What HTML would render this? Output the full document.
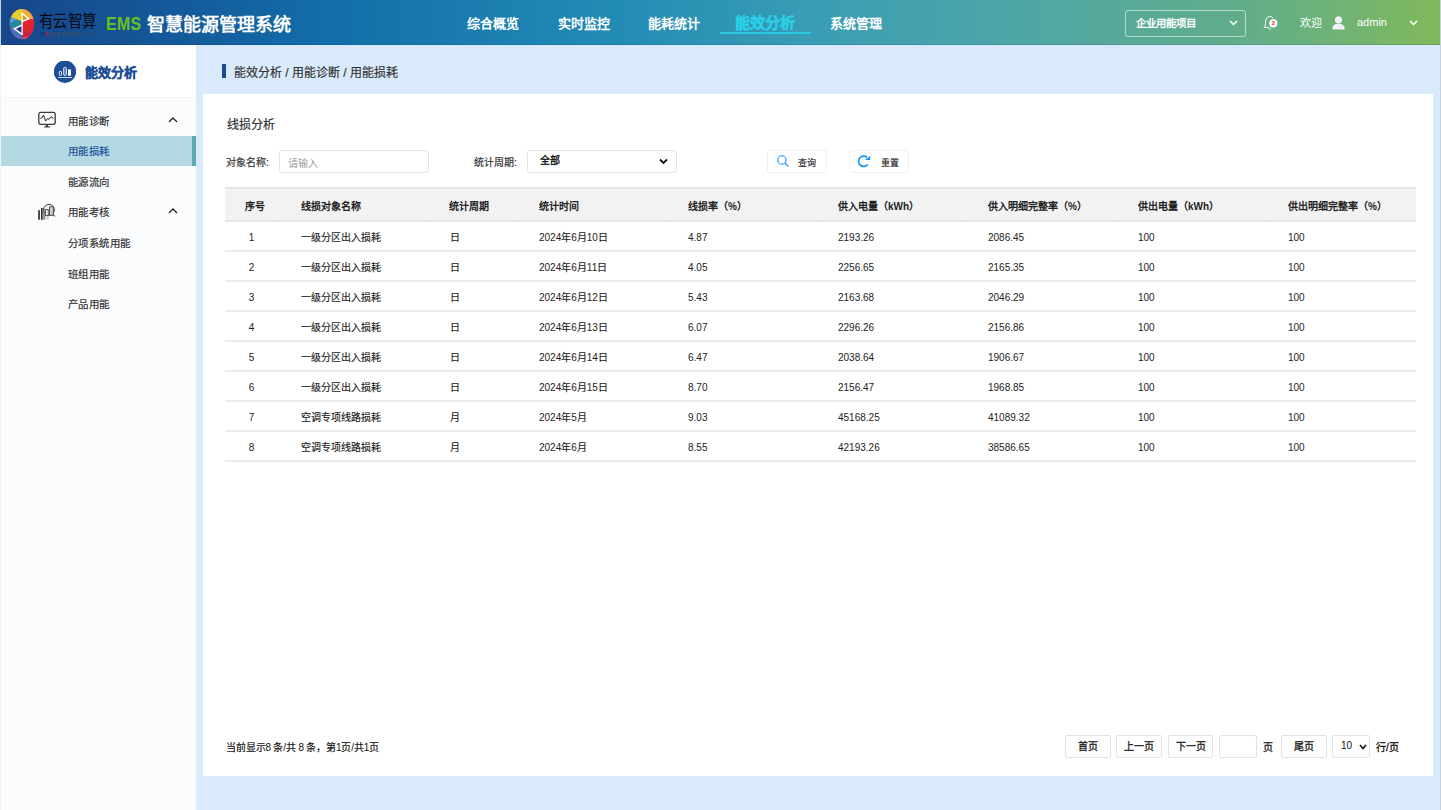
<!DOCTYPE html>
<html lang="zh-CN"><head><meta charset="utf-8"><title>EMS</title>
<style>
*{margin:0;padding:0;box-sizing:border-box}
html,body{width:1441px;height:810px;overflow:hidden;background:#d9eafd;font-family:"Liberation Sans",sans-serif;color:#333}
.abs{position:absolute;white-space:nowrap}
#hdr{position:absolute;left:0;top:0;width:1441px;height:45px;background:linear-gradient(90deg,#17468a 0px,#14599a 170px,#126da8 320px,#228bb5 610px,#3a9db5 810px,#4da6a7 1010px,#63ae88 1260px,#7fb85e 1430px,#7fb85e 1441px)}
.nav{position:absolute;top:15px;font-size:13px;font-weight:bold;color:#fff;line-height:18px;white-space:nowrap}
.mi{position:absolute;left:68px;font-size:11px;line-height:14px;color:#333;white-space:nowrap;transform:scale(0.95);transform-origin:0 0}
.lbl{position:absolute;font-size:10px;line-height:12px;color:#333;font-weight:500;white-space:nowrap}
.box{position:absolute;border:1px solid #e3e3e3;border-radius:3px;background:#fff}
.th{position:absolute;top:201px;font-size:10px;line-height:12px;font-weight:bold;color:#222;white-space:nowrap}
.td{position:absolute;font-size:10px;line-height:12px;color:#222;white-space:nowrap}
.pb{position:absolute;top:735px;height:23px;border:1px solid #e3e3e3;border-radius:2px;background:#fff}
.md{-webkit-text-stroke:0.2px currentColor}
.bd{-webkit-text-stroke:0.3px currentColor}
.c{-webkit-text-stroke:0.15px currentColor}
.pt{position:absolute;top:741px;font-size:10px;line-height:12px;color:#333;white-space:nowrap}
</style></head><body>
<div id="hdr"></div>
<div class="abs" style="left:0;top:44px;width:1441px;height:1px;background:rgba(0,20,80,0.12)"></div>
<div class="abs" style="left:0;top:0;width:1px;height:45px;background:#c5d3e6"></div>
<svg class="abs" style="left:9px;top:8px" width="27" height="32" viewBox="0 0 27 32">
 <defs><clipPath id="ell"><ellipse cx="12.9" cy="16" rx="12.2" ry="15.1"/></clipPath></defs>
 <g clip-path="url(#ell)">
  <rect x="0" y="0" width="27" height="32" fill="#e03050"/>
  <polygon points="0,0 13,0 13,13.6 0,8.5" fill="#e3cf2e"/>
  <polygon points="0,8.5 8,11.5 0,16" fill="#48a6da"/>
  <polygon points="0,16 8,11.5 13,13.6 13,17.1 5.3,20.7 0,20" fill="#1f8a9e"/>
  <polygon points="0,20 5.3,20.7 13,26.4 13,32 0,32" fill="#4a6fc0"/>
  <polygon points="13,17.1 5.3,20.7 13,26.4" fill="#1c2c8c"/>
  <polygon points="13,0 27,0 27,12 19.8,10.7 13,5.3" fill="#f1a83c"/>
  <polygon points="13,5.3 19.8,10.7 13,13.6" fill="#e8901e"/>
  <polygon points="13,13.6 19.8,10.7 27,12 27,22 13,24" fill="#e0222c"/>
  <polygon points="13,24 27,22 27,27 13,30" fill="#c82242"/>
  <polygon points="13,30 27,27 27,32 13,32" fill="#f05878"/>
 </g>
 <path d="M13.1 5.3 L19.8 10.7 L13.1 13.6" fill="none" stroke="#fff" stroke-width="1.5" stroke-linejoin="miter"/>
 <path d="M13.1 17.1 L5.3 20.7 L13.1 26.4" fill="none" stroke="#fff" stroke-width="1.5"/>
 <line x1="13.1" y1="4.8" x2="13.1" y2="27" stroke="#fff" stroke-width="1.3"/>
</svg>
<div class="abs" style="left:39px;top:12px;font-size:17px;line-height:20px;color:#050a14;transform:scaleX(0.85);transform-origin:0 0">有云智算</div>
<div class="abs" style="left:40px;top:31px;font-size:6px;line-height:6px;font-weight:bold;color:#50503e;letter-spacing:1.6px"><span style="color:#1a2a80">T</span><span style="color:#c0203a">F</span>CLOUD<span style="color:#3a4a6a;font-weight:normal">.com</span></div>
<div class="abs" style="left:106px;top:14px;font-size:18px;line-height:20px;color:#6cc01a;font-weight:bold;letter-spacing:0.4px;transform:scaleX(0.88);transform-origin:0 0">EMS</div>
<div class="abs" style="left:147px;top:14px;font-size:18px;line-height:22px;color:#fff;font-weight:bold">智慧能源管理系统</div>
<div class="nav" style="left:467px">综合概览</div>
<div class="nav" style="left:558px">实时监控</div>
<div class="nav" style="left:648px">能耗统计</div>
<div class="nav" style="left:830px">系统管理</div>
<div class="nav" style="left:735px;top:14px;font-size:15px;color:#2ad0e8;-webkit-text-stroke:0.2px #2ad0e8">能效分析</div>
<div class="abs" style="left:720px;top:32px;width:91px;height:2px;background:#2bc8e0"></div>
<div class="abs" style="left:1125px;top:10px;width:121px;height:27px;border:1px solid rgba(255,255,255,0.55);border-radius:3px"></div>
<div class="abs" style="left:1136px;top:16px;font-size:10.5px;line-height:14px;color:#fff;font-weight:bold">企业用能项目</div>
<svg class="abs" style="left:1229px;top:20px" width="9" height="6" viewBox="0 0 9 6"><path d="M1 1 L4.5 4.5 L8 1" fill="none" stroke="#fff" stroke-width="1.5"/></svg>
<svg class="abs" style="left:1262px;top:14px" width="17" height="17" viewBox="0 0 17 17">
 <path d="M2 13.5 C3.5 12 3.5 10 3.5 8 C3.5 4.5 5.5 2.5 8 2.5 C9.5 2.5 10.5 3.3 11.2 4.5" fill="none" stroke="#fff" stroke-width="1"/>
 <path d="M2 13.5 L6.5 13.5 M6.5 13.5 C6.5 15 8 15.5 9 14.8" fill="none" stroke="#fff" stroke-width="1"/>
 <circle cx="11.3" cy="9.4" r="4.1" fill="#fff"/>
 <text x="11.3" y="11.4" font-size="5.5" font-weight="bold" fill="#e0103a" text-anchor="middle" font-family="Liberation Sans">2</text>
</svg>
<div class="abs" style="left:1300px;top:16px;font-size:11px;line-height:14px;color:#fff">欢迎</div>
<svg class="abs" style="left:1332px;top:16px" width="13" height="14" viewBox="0 0 13 14">
 <circle cx="6.5" cy="3.8" r="3.6" fill="#f0f1f6"/>
 <path d="M0.3 13.5 C0.3 9 3 7.8 6.5 7.8 C10 7.8 12.7 9 12.7 13.5 Z" fill="#f0f1f6"/>
</svg>
<div class="abs" style="left:1357px;top:15px;font-size:11px;line-height:14px;color:#fff">admin</div>
<svg class="abs" style="left:1409px;top:20px" width="9" height="6" viewBox="0 0 9 6"><path d="M1 1 L4.5 4.5 L8 1" fill="none" stroke="#fff" stroke-width="1.5"/></svg>
<div class="abs" style="left:0;top:45px;width:196px;height:765px;background:#fbfcfe"></div>
<div class="abs" style="left:0;top:45px;width:196px;height:52px;background:#fff"></div>
<div class="abs" style="left:0;top:97px;width:196px;height:1px;background:#f3f4f5"></div>
<svg class="abs" style="left:54px;top:61px" width="22" height="23" viewBox="0 0 22 23">
 <circle cx="10.95" cy="10.7" r="11.2" fill="#1d4e96"/>
 <rect x="5.3" y="10.3" width="2.2" height="4.1" rx="0.8" fill="none" stroke="#fff" stroke-width="0.9"/>
 <rect x="9.6" y="6.4" width="2.8" height="8" rx="1" fill="#5a82b8" stroke="#e8eef8" stroke-width="0.9"/>
 <rect x="14" y="8.3" width="2.9" height="6.4" rx="0.6" fill="#fff"/>
 <line x1="4.1" y1="16.5" x2="18.1" y2="16.5" stroke="#c8d6ea" stroke-width="1"/>
</svg>
<div class="abs" style="left:85px;top:64px;font-size:13px;line-height:18px;color:#1d4e96;font-weight:bold;-webkit-text-stroke:0.3px #1d4e96">能效分析</div>
<svg class="abs" style="left:38px;top:111px" width="18" height="18" viewBox="0 0 18 18">
 <rect x="0.8" y="1.3" width="16.4" height="12" rx="2" fill="none" stroke="#3a3a3a" stroke-width="1.3"/>
 <path d="M2.3 7.3 L3.6 7.1 L5.5 4.2 L7.7 10 L9.6 7.5 L11 8.3 L12.9 5.9 L15.5 7.3" fill="none" stroke="#222" stroke-width="1"/>
 <path d="M8.3 13.3 L9.7 13.3 L10.3 15.3 L12 15.6 L12 16.6 L6.2 16.6 L6.2 15.6 L7.7 15.3 Z" fill="#444"/>
</svg>
<div class="mi md" style="top:115px">用能诊断</div>
<svg class="abs" style="left:168px;top:117px" width="10" height="6" viewBox="0 0 10 6"><path d="M1 5 L5 1 L9 5" fill="none" stroke="#222" stroke-width="1.3"/></svg>
<div class="abs" style="left:0;top:136px;width:192px;height:30px;background:#b3d9e3"></div>
<div class="abs" style="left:192px;top:136px;width:4px;height:30px;background:#5aaab0"></div>
<div class="mi md" style="top:145px;color:#1d4f9a">用能损耗</div>
<div class="mi md" style="top:176px">能源流向</div>
<svg class="abs" style="left:37px;top:203px" width="19" height="17" viewBox="0 0 19 17">
 <rect x="1.1" y="7.2" width="1.9" height="9.5" fill="#444"/>
 <rect x="4.2" y="5" width="4.3" height="11.7" fill="#9a9a9a"/>
 <rect x="4" y="5" width="1.4" height="11.7" fill="#333"/>
 <rect x="10" y="12.8" width="1.6" height="3.9" fill="#c4c4c4"/>
 <circle cx="12" cy="6.8" r="5.4" fill="#fbfcfe" fill-opacity="0.6" stroke="#3a3a3a" stroke-width="1"/>
 <rect x="8.4" y="6.6" width="2.8" height="6" fill="#fff" stroke="#444" stroke-width="0.9"/>
 <rect x="12.5" y="3.8" width="3.8" height="8.5" fill="#d0d0d0" stroke="#444" stroke-width="0.9"/>
 <line x1="15.5" y1="11" x2="18.3" y2="13.6" stroke="#444" stroke-width="1"/>
</svg>
<div class="mi md" style="top:206px">用能考核</div>
<svg class="abs" style="left:168px;top:208px" width="10" height="6" viewBox="0 0 10 6"><path d="M1 5 L5 1 L9 5" fill="none" stroke="#222" stroke-width="1.3"/></svg>
<div class="mi md" style="top:237px">分项系统用能</div>
<div class="mi md" style="top:268px">班组用能</div>
<div class="mi md" style="top:298px">产品用能</div>
<div class="abs" style="left:0;top:45px;width:1px;height:765px;background:#f0f3f8"></div>
<div class="abs" style="left:222px;top:64px;width:4px;height:14px;background:#1a4a8f"></div>
<div class="abs md" style="left:234px;top:66px;font-size:12px;line-height:15px;color:#333">能效分析 / 用能诊断 / 用能损耗</div>
<div class="abs" style="left:203px;top:94px;width:1230px;height:682px;background:#fff"></div>
<div class="abs md" style="left:227px;top:118px;font-size:12px;line-height:15px;color:#333">线损分析</div>
<div class="lbl md" style="left:226px;top:157px">对象名称:</div>
<div class="box" style="left:279px;top:150px;width:150px;height:23px"></div>
<div class="abs" style="left:288px;top:158px;font-size:10px;line-height:12px;color:#999">请输入</div>
<div class="lbl md" style="left:474px;top:157px">统计周期:</div>
<div class="box" style="left:527px;top:150px;width:150px;height:23px"></div>
<div class="abs" style="left:540px;top:155px;font-size:10px;line-height:12px;color:#111;-webkit-text-stroke:0.35px #111">全部</div>
<svg class="abs" style="left:659px;top:158px" width="9" height="7" viewBox="0 0 9 7"><path d="M1 1.5 L4.5 5 L8 1.5" fill="none" stroke="#111" stroke-width="1.8"/></svg>
<div class="box" style="left:767px;top:150px;width:60px;height:23px;border-color:#f0f0f0"></div>
<svg class="abs" style="left:776px;top:154px" width="14" height="14" viewBox="0 0 14 14"><circle cx="5.9" cy="6.0" r="4.2" fill="none" stroke="#1890ff" stroke-width="1.1"/><line x1="8.9" y1="9.0" x2="12.4" y2="12.6" stroke="#1890ff" stroke-width="1.1"/></svg>
<div class="abs" style="left:798px;top:158px;font-size:9px;line-height:11px;color:#222;-webkit-text-stroke:0.15px #222">查询</div>
<div class="box" style="left:849px;top:150px;width:60px;height:23px;border-color:#f0f0f0"></div>
<svg class="abs" style="left:857px;top:154px" width="14" height="14" viewBox="0 0 14 14"><path d="M10.79 10.52 A5.2 5.2 0 1 1 10.1 3.27" fill="none" stroke="#1890ff" stroke-width="1.7"/><polygon points="8,5.9 13.1,2.1 13.1,5.9" fill="#1890ff"/></svg>
<div class="abs" style="left:881px;top:158px;font-size:9px;line-height:11px;color:#222;-webkit-text-stroke:0.15px #222">重置</div>
<div class="abs" style="left:225px;top:187px;width:1191px;height:35px;background:#f2f2f2;border-top:2px solid #e6e6e6;border-bottom:2px solid #e6e6e6"></div>
<div class="abs" style="left:278px;top:189px;width:1px;height:31px;background:#f6f6f6"></div>
<div class="abs" style="left:427px;top:189px;width:1px;height:31px;background:#f6f6f6"></div>
<div class="abs" style="left:516px;top:189px;width:1px;height:31px;background:#f6f6f6"></div>
<div class="abs" style="left:666px;top:189px;width:1px;height:31px;background:#f6f6f6"></div>
<div class="abs" style="left:816px;top:189px;width:1px;height:31px;background:#f6f6f6"></div>
<div class="abs" style="left:966px;top:189px;width:1px;height:31px;background:#f6f6f6"></div>
<div class="abs" style="left:1116px;top:189px;width:1px;height:31px;background:#f6f6f6"></div>
<div class="abs" style="left:1266px;top:189px;width:1px;height:31px;background:#f6f6f6"></div>
<div class="th" style="left:245px">序号</div>
<div class="th" style="left:301px">线损对象名称</div>
<div class="th" style="left:449px">统计周期</div>
<div class="th" style="left:539px">统计时间</div>
<div class="th" style="left:688px">线损率（%）</div>
<div class="th" style="left:838px">供入电量（kWh）</div>
<div class="th" style="left:988px">供入明细完整率（%）</div>
<div class="th" style="left:1138px">供出电量（kWh）</div>
<div class="th" style="left:1288px">供出明细完整率（%）</div>
<div class="abs" style="left:225px;top:250px;width:1191px;height:2px;background:#ebebeb"></div>
<div class="td" style="left:225px;top:232px;width:53px;text-align:center">1</div>
<div class="td" style="left:301px;top:232px"><span class="c">一级分区出入损耗</span></div>
<div class="td" style="left:450px;top:232px"><span class="c">日</span></div>
<div class="td" style="left:539px;top:232px">2024<span class="c">年</span>6<span class="c">月</span>10<span class="c">日</span></div>
<div class="td" style="left:688px;top:232px">4.87</div>
<div class="td" style="left:838px;top:232px">2193.26</div>
<div class="td" style="left:988px;top:232px">2086.45</div>
<div class="td" style="left:1138px;top:232px">100</div>
<div class="td" style="left:1288px;top:232px">100</div>
<div class="abs" style="left:225px;top:280px;width:1191px;height:2px;background:#ebebeb"></div>
<div class="td" style="left:225px;top:262px;width:53px;text-align:center">2</div>
<div class="td" style="left:301px;top:262px"><span class="c">一级分区出入损耗</span></div>
<div class="td" style="left:450px;top:262px"><span class="c">日</span></div>
<div class="td" style="left:539px;top:262px">2024<span class="c">年</span>6<span class="c">月</span>11<span class="c">日</span></div>
<div class="td" style="left:688px;top:262px">4.05</div>
<div class="td" style="left:838px;top:262px">2256.65</div>
<div class="td" style="left:988px;top:262px">2165.35</div>
<div class="td" style="left:1138px;top:262px">100</div>
<div class="td" style="left:1288px;top:262px">100</div>
<div class="abs" style="left:225px;top:310px;width:1191px;height:2px;background:#ebebeb"></div>
<div class="td" style="left:225px;top:292px;width:53px;text-align:center">3</div>
<div class="td" style="left:301px;top:292px"><span class="c">一级分区出入损耗</span></div>
<div class="td" style="left:450px;top:292px"><span class="c">日</span></div>
<div class="td" style="left:539px;top:292px">2024<span class="c">年</span>6<span class="c">月</span>12<span class="c">日</span></div>
<div class="td" style="left:688px;top:292px">5.43</div>
<div class="td" style="left:838px;top:292px">2163.68</div>
<div class="td" style="left:988px;top:292px">2046.29</div>
<div class="td" style="left:1138px;top:292px">100</div>
<div class="td" style="left:1288px;top:292px">100</div>
<div class="abs" style="left:225px;top:340px;width:1191px;height:2px;background:#ebebeb"></div>
<div class="td" style="left:225px;top:322px;width:53px;text-align:center">4</div>
<div class="td" style="left:301px;top:322px"><span class="c">一级分区出入损耗</span></div>
<div class="td" style="left:450px;top:322px"><span class="c">日</span></div>
<div class="td" style="left:539px;top:322px">2024<span class="c">年</span>6<span class="c">月</span>13<span class="c">日</span></div>
<div class="td" style="left:688px;top:322px">6.07</div>
<div class="td" style="left:838px;top:322px">2296.26</div>
<div class="td" style="left:988px;top:322px">2156.86</div>
<div class="td" style="left:1138px;top:322px">100</div>
<div class="td" style="left:1288px;top:322px">100</div>
<div class="abs" style="left:225px;top:370px;width:1191px;height:2px;background:#ebebeb"></div>
<div class="td" style="left:225px;top:352px;width:53px;text-align:center">5</div>
<div class="td" style="left:301px;top:352px"><span class="c">一级分区出入损耗</span></div>
<div class="td" style="left:450px;top:352px"><span class="c">日</span></div>
<div class="td" style="left:539px;top:352px">2024<span class="c">年</span>6<span class="c">月</span>14<span class="c">日</span></div>
<div class="td" style="left:688px;top:352px">6.47</div>
<div class="td" style="left:838px;top:352px">2038.64</div>
<div class="td" style="left:988px;top:352px">1906.67</div>
<div class="td" style="left:1138px;top:352px">100</div>
<div class="td" style="left:1288px;top:352px">100</div>
<div class="abs" style="left:225px;top:400px;width:1191px;height:2px;background:#ebebeb"></div>
<div class="td" style="left:225px;top:382px;width:53px;text-align:center">6</div>
<div class="td" style="left:301px;top:382px"><span class="c">一级分区出入损耗</span></div>
<div class="td" style="left:450px;top:382px"><span class="c">日</span></div>
<div class="td" style="left:539px;top:382px">2024<span class="c">年</span>6<span class="c">月</span>15<span class="c">日</span></div>
<div class="td" style="left:688px;top:382px">8.70</div>
<div class="td" style="left:838px;top:382px">2156.47</div>
<div class="td" style="left:988px;top:382px">1968.85</div>
<div class="td" style="left:1138px;top:382px">100</div>
<div class="td" style="left:1288px;top:382px">100</div>
<div class="abs" style="left:225px;top:430px;width:1191px;height:2px;background:#ebebeb"></div>
<div class="td" style="left:225px;top:412px;width:53px;text-align:center">7</div>
<div class="td" style="left:301px;top:412px"><span class="c">空调专项线路损耗</span></div>
<div class="td" style="left:450px;top:412px"><span class="c">月</span></div>
<div class="td" style="left:539px;top:412px">2024<span class="c">年</span>5<span class="c">月</span></div>
<div class="td" style="left:688px;top:412px">9.03</div>
<div class="td" style="left:838px;top:412px">45168.25</div>
<div class="td" style="left:988px;top:412px">41089.32</div>
<div class="td" style="left:1138px;top:412px">100</div>
<div class="td" style="left:1288px;top:412px">100</div>
<div class="abs" style="left:225px;top:460px;width:1191px;height:2px;background:#ebebeb"></div>
<div class="td" style="left:225px;top:442px;width:53px;text-align:center">8</div>
<div class="td" style="left:301px;top:442px"><span class="c">空调专项线路损耗</span></div>
<div class="td" style="left:450px;top:442px"><span class="c">月</span></div>
<div class="td" style="left:539px;top:442px">2024<span class="c">年</span>6<span class="c">月</span></div>
<div class="td" style="left:688px;top:442px">8.55</div>
<div class="td" style="left:838px;top:442px">42193.26</div>
<div class="td" style="left:988px;top:442px">38586.65</div>
<div class="td" style="left:1138px;top:442px">100</div>
<div class="td" style="left:1288px;top:442px">100</div>
<div class="pt" style="left:226px;top:742px;color:#111;letter-spacing:-0.15px"><span class="c">当前显示</span>8 <span class="c">条</span>/<span class="c">共</span> 8 <span class="c">条，第</span>1<span class="c">页</span>/<span class="c">共</span>1<span class="c">页</span></div>
<div class="pb" style="left:1065px;width:46px"></div>
<div class="pt bd" style="left:1065px;width:46px;text-align:center;color:#222">首页</div>
<div class="pb" style="left:1116px;width:46px"></div>
<div class="pt bd" style="left:1116px;width:46px;text-align:center;color:#222">上一页</div>
<div class="pb" style="left:1168px;width:45px"></div>
<div class="pt bd" style="left:1168px;width:45px;text-align:center;color:#222">下一页</div>
<div class="pb" style="left:1281px;width:46px"></div>
<div class="pt bd" style="left:1281px;width:46px;text-align:center;color:#222">尾页</div>
<div class="pb" style="left:1219px;width:38px"></div>
<div class="pt bd" style="left:1263px;top:742px;color:#222">页</div>
<div class="pb" style="left:1332px;width:38px"></div>
<div class="pt" style="left:1341px;top:740px;color:#111">10</div>
<svg class="abs" style="left:1359px;top:744px" width="8" height="6" viewBox="0 0 8 6"><path d="M1 1 L4 4.5 L7 1" fill="none" stroke="#111" stroke-width="1.6"/></svg>
<div class="pt bd" style="left:1376px;top:742px;color:#111">行/页</div>
<div class="abs" style="left:1440px;top:0;width:1px;height:810px;background:#c4d0dc"></div>
</body></html>
